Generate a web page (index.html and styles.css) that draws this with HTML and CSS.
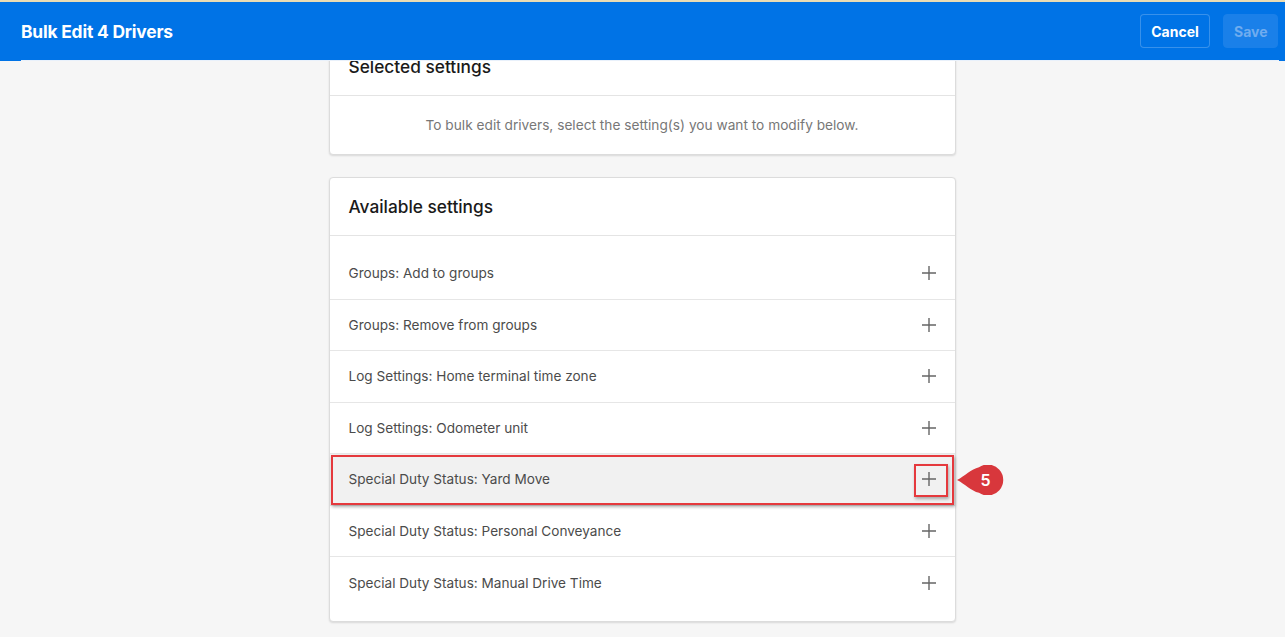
FILE: index.html
```html
<!DOCTYPE html>
<html lang="en">
<head>
<meta charset="utf-8">
<title>Bulk Edit 4 Drivers</title>
<link rel="stylesheet" href="styles.css">
</head>
<body>
<div class="topline"></div>
<header class="header">
  <h1 class="header-title">Bulk Edit 4 Drivers</h1>
  <div class="header-actions">
    <button class="btn btn-cancel">Cancel</button>
    <button class="btn btn-save">Save</button>
  </div>
</header>
<main class="main">
  <section class="card card-selected">
    <div class="card-head"><h2 class="card-title">Selected settings</h2></div>
    <div class="card-empty">To bulk edit drivers, select the setting(s) you want to modify below.</div>
  </section>
  <section class="card">
    <div class="card-head"><h2 class="card-title">Available settings</h2></div>
    <ul class="list">
      <li class="row"><span>Groups: Add to groups</span><span class="plus"><svg viewBox="0 0 16 16" width="16" height="16"><path d="M8 1v14M1 8h14"/></svg></span></li>
      <li class="row"><span>Groups: Remove from groups</span><span class="plus"><svg viewBox="0 0 16 16" width="16" height="16"><path d="M8 1v14M1 8h14"/></svg></span></li>
      <li class="row"><span>Log Settings: Home terminal time zone</span><span class="plus"><svg viewBox="0 0 16 16" width="16" height="16"><path d="M8 1v14M1 8h14"/></svg></span></li>
      <li class="row"><span>Log Settings: Odometer unit</span><span class="plus"><svg viewBox="0 0 16 16" width="16" height="16"><path d="M8 1v14M1 8h14"/></svg></span></li>
      <li class="row row-hl"><span>Special Duty Status: Yard Move</span><span class="plus plus-hl"><svg viewBox="0 0 16 16" width="16" height="16"><path d="M8 1v14M1 8h14"/></svg></span>
        <span class="callout"><svg class="callout-shape" viewBox="0 0 48 30" width="48" height="30"><path d="M0 15 C8 11 14 4 22 2.2 A15.5 15.5 0 1 1 22 27.8 C14 26 8 19 0 15 Z"/></svg><span class="callout-num">5</span></span>
      </li>
      <li class="row"><span>Special Duty Status: Personal Conveyance</span><span class="plus"><svg viewBox="0 0 16 16" width="16" height="16"><path d="M8 1v14M1 8h14"/></svg></span></li>
      <li class="row"><span>Special Duty Status: Manual Drive Time</span><span class="plus"><svg viewBox="0 0 16 16" width="16" height="16"><path d="M8 1v14M1 8h14"/></svg></span></li>
    </ul>
  </section>
</main>
</body>
</html>
```
FILE: styles.css
```css
* { box-sizing: border-box; }
html, body { margin: 0; padding: 0; }
body {
  background: #f6f6f6;
  font-family: Inter, "Liberation Sans", Arial, sans-serif;
  height: 637px;
  overflow: hidden;
}
.topline { height: 2px; background: #eadcb4; }
.header {
  position: relative;
  z-index: 2;
  height: 59px;
  background: #0073e6;
  display: flex;
  align-items: center;
  justify-content: space-between;
  padding: 0 7px 1px 21px;
}
.header::after {
  content: "";
  position: absolute;
  left: 21px;
  right: 6px;
  bottom: 0;
  height: 1px;
  background: #e9f1fb;
}
.header-title {
  margin: 0;
  color: #fff;
  font-size: 17.4px;
  font-weight: 700;
  letter-spacing: -0.2px;
}
.header-actions { display: flex; gap: 13px; }
.btn {
  font-family: inherit;
  font-size: 14px;
  font-weight: 700;
  height: 34px;
  border-radius: 4px;
  padding: 0 10px;
}
.btn-cancel {
  color: #fff;
  background: #0073e6;
  border: 1px solid rgba(255,255,255,0.22);
  width: 70px;
}
.btn-save {
  color: #70acef;
  background: #1a80e9;
  border: 1px solid #1a80e9;
  width: 55px;
}
.main {
  display: flex;
  flex-direction: column;
  align-items: center;
  gap: 22px;
  padding-right: 1px;
}
.card {
  width: 627px;
  background: #fff;
  border: 1px solid #dcdcdc;
  border-radius: 4px;
  box-shadow: 0 1px 2px rgba(0,0,0,0.12);
}
.card-selected { margin-top: -24px; }
.card-head {
  height: 58px;
  display: flex;
  align-items: center;
  padding: 0 19px;
  border-bottom: 1px solid #e4e4e4;
}
.card-title {
  margin: 0;
  font-size: 17.3px;
  font-weight: 500;
  color: #1a1a1a;
}
.card-empty {
  height: 58px;
  display: flex;
  align-items: center;
  justify-content: center;
  font-size: 13.7px;
  color: #777;
}
.list { list-style: none; margin: 0; padding: 12px 0 12px; }
.row {
  position: relative;
  height: 51.5px;
  display: flex;
  align-items: center;
  justify-content: space-between;
  padding: 0 18px 0 19px;
  font-size: 13.6px;
  color: #4b4b4b;
  border-bottom: 1px solid #e6e6e6;
}
.row:last-child { border-bottom: none; }
.plus { display: flex; width: 16px; height: 16px; }
.plus svg { stroke: #666; stroke-width: 1.4; fill: none; }
.row-hl { background: #f1f1f1; }
.row-hl::after {
  content: "";
  position: absolute;
  left: 1px;
  right: 1px;
  top: 1px;
  bottom: 0;
  border: 2px solid #e5393d;
  box-shadow: 1px 2px 3px rgba(0,0,0,0.3);
  pointer-events: none;
}
.plus-hl { position: relative; }
.plus-hl::after {
  content: "";
  position: absolute;
  left: -7px;
  top: -7px;
  width: 30px;
  height: 29px;
  border: 2px solid #e5393d;
  box-shadow: 1px 2px 3px rgba(0,0,0,0.3);
}
.callout {
  position: absolute;
  left: calc(100% + 2px);
  top: 11px;
  width: 48px;
  height: 30px;
}
.callout-shape { display: block; fill: #d8373c; }
.callout-num {
  position: absolute;
  left: 20px;
  width: 18px;
  top: 0;
  height: 30px;
  display: flex;
  align-items: center;
  justify-content: center;
  color: #fff;
  font-size: 16px;
  font-weight: 600;
}
```
